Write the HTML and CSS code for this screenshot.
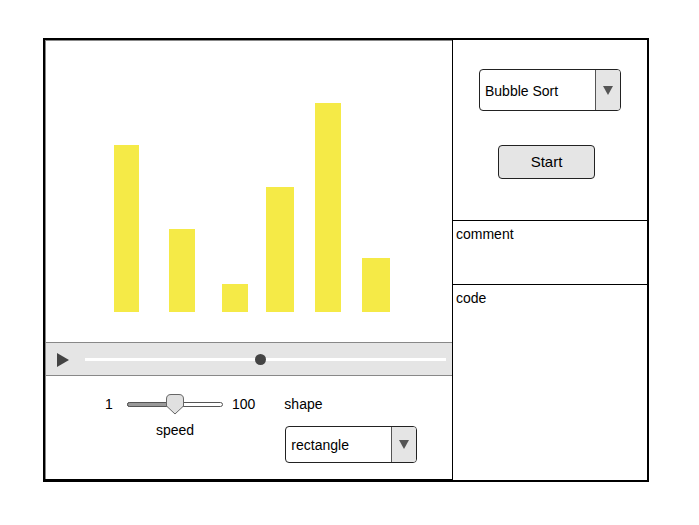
FILE: index.html
```html
<!DOCTYPE html>
<html>
<head>
<meta charset="utf-8">
<link rel="stylesheet" href="styles.css">
</head>
<body>
<div class="app">
  <div class="left">
    <div class="left-inner">
      <div class="chart">
        <div class="bar" style="margin-left:68px;width:25px;height:167px"></div>
        <div class="bar" style="margin-left:30px;width:26px;height:83px"></div>
        <div class="bar" style="margin-left:27px;width:26px;height:28px"></div>
        <div class="bar" style="margin-left:18px;width:28px;height:125px"></div>
        <div class="bar" style="margin-left:21px;width:26px;height:209px"></div>
        <div class="bar" style="margin-left:21px;width:28px;height:54px"></div>
      </div>
      <div class="player">
        <svg class="play" width="12" height="14" viewBox="0 0 12 14"><polygon points="0,0 12,7 0,14" fill="#444"/></svg>
        <div class="track"><div class="track-knob"></div></div>
      </div>
      <div class="controls">
        <div class="speed">
          <span class="val one">1</span>
          <div class="slider-col">
            <svg class="slider" width="96" height="21" viewBox="0 0 96 21">
              <rect x="0.5" y="8.5" width="95" height="4" rx="2" fill="#fff" stroke="#555"/>
              <rect x="0.5" y="8.5" width="45" height="4" rx="2" fill="#999" stroke="#555"/>
              <path d="M39.5,5 Q39.5,0.5 44,0.5 H52 Q56.5,0.5 56.5,5 V12 L48,20 L39.5,12 Z" fill="#e0e0e0" stroke="#666"/>
            </svg>
            <span class="label">speed</span>
          </div>
          <span class="val hundred">100</span>
        </div>
        <div class="shape">
          <span class="val">shape</span>
          <div class="select shape-select">
            <span class="select-text">rectangle</span>
            <span class="select-btn"><svg width="10" height="9" viewBox="0 0 10 9"><polygon points="0,0 10,0 5,9" fill="#555"/></svg></span>
          </div>
        </div>
      </div>
    </div>
  </div>
  <div class="right">
    <div class="top">
      <div class="select algo-select">
        <span class="select-text">Bubble Sort</span>
        <span class="select-btn"><svg width="10" height="9" viewBox="0 0 10 9"><polygon points="0,0 10,0 5,9" fill="#555"/></svg></span>
      </div>
      <div class="start">Start</div>
    </div>
    <div class="comment">comment</div>
    <div class="code">code</div>
  </div>
</div>
</body>
</html>
```

FILE: styles.css
```css
html, body {
  margin: 0;
  padding: 0;
  background: #fff;
}
body {
  font-family: "Liberation Sans", Arial, sans-serif;
  font-size: 14px;
  color: #000;
}
.app {
  display: flex;
  margin: 38px 0 0 43px;
  height: 444px;
}
.left {
  width: 407px;
  border-left: 2px solid #000;
  border-top: 2px solid #000;
  border-bottom: 3px solid #000;
  display: flex;
}
.left-inner {
  flex: 1;
  border-left: 1px solid #888;
  border-top: 1px solid #888;
  display: flex;
  flex-direction: column;
}
.chart {
  height: 271px;
  padding-bottom: 30px;
  display: flex;
  align-items: flex-end;
}
.bar {
  background: #f5ea47;
  flex: none;
}
.player {
  height: 32px;
  background: #e5e5e5;
  border-top: 1px solid #888;
  border-bottom: 1px solid #888;
  display: flex;
  align-items: center;
  padding-left: 11px;
  padding-right: 6px;
}
.play {
  display: block;
  flex: none;
  margin-top: 1px;
}
.track {
  flex: 1;
  height: 3px;
  background: #fff;
  margin-left: 16px;
  position: relative;
}
.track-knob {
  position: absolute;
  left: 48.4%;
  top: -4px;
  width: 11px;
  height: 11px;
  border-radius: 50%;
  background: #444;
  margin-left: -5px;
}
.controls {
  flex: 1;
  display: flex;
  align-items: flex-start;
  padding-top: 17px;
  padding-left: 59px;
}
.speed {
  display: flex;
  align-items: flex-start;
}
.val {
  line-height: 22px;
  display: block;
}
.one {
  width: 9px;
  margin-right: 13px;
}
.slider-col {
  display: flex;
  flex-direction: column;
  align-items: center;
  width: 96px;
}
.slider {
  display: block;
  margin-top: 1px;
}
.label {
  margin-top: 7px;
  line-height: 16px;
}
.hundred {
  margin-left: 9px;
}
.shape {
  margin-left: 29px;
  display: flex;
  flex-direction: column;
}
.select {
  display: flex;
  border: 1px solid #222;
  border-radius: 4px;
  overflow: hidden;
  box-sizing: border-box;
  background: #fff;
}
.select-text {
  flex: 1;
  display: flex;
  align-items: center;
  padding-left: 5px;
}
.select-btn {
  width: 24px;
  background: #e5e5e5;
  border-left: 1px solid #555;
  display: flex;
  align-items: center;
  justify-content: center;
}
.select-btn svg {
  display: block;
}
.shape-select {
  margin-top: 11px;
  margin-left: 1px;
  width: 132px;
  height: 37px;
}
.algo-select {
  width: 142px;
  height: 42px;
}
.algo-select .select-text {
  padding-top: 1px;
}
.right {
  width: 194px;
  border-left: 1px solid #000;
  border-right: 2px solid #000;
  border-top: 2px solid #000;
  border-bottom: 2px solid #000;
  display: flex;
  flex-direction: column;
}
.top {
  height: 181px;
  box-sizing: border-box;
  border-bottom: 1px solid #000;
  display: flex;
  flex-direction: column;
  align-items: center;
  padding-top: 29px;
}
.start {
  margin-top: 34px;
  margin-right: 7px;
  width: 97px;
  height: 34px;
  box-sizing: border-box;
  border: 1px solid #222;
  border-radius: 4px;
  background: #e5e5e5;
  display: flex;
  align-items: center;
  justify-content: center;
  font-size: 15px;
  padding-bottom: 1px;
}
.comment {
  height: 64px;
  box-sizing: border-box;
  border-bottom: 1px solid #000;
  padding: 5px 0 0 3px;
  line-height: 17px;
}
.code {
  flex: 1;
  padding: 5px 0 0 3px;
  line-height: 17px;
}
```
